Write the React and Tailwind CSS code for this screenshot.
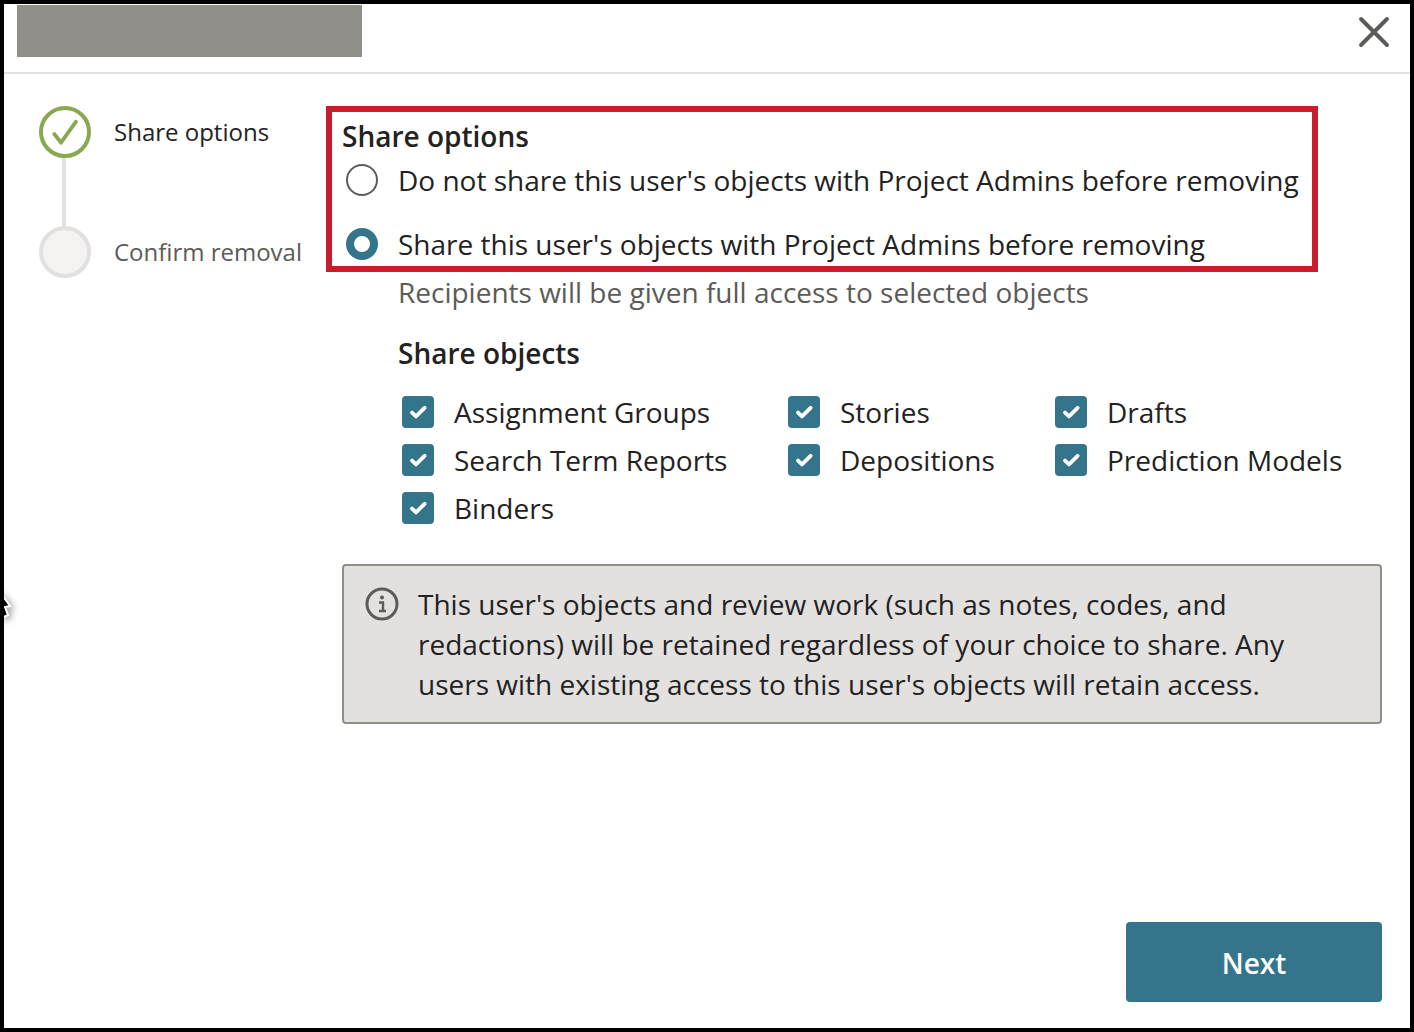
import React from "react";
import { X } from "lucide-react";

const font = { fontFamily: '"Open Sans", sans-serif' };

function Check({ label }) {
  return (
    <div className="flex items-center h-12">
      <span className="w-8 h-8 rounded-[4px] bg-[#34758c] shrink-0">
        <svg width="32" height="32" viewBox="0 0 32 32" fill="none">
          <path d="M10 16.6 L14 20.4 L22.6 11.8" stroke="#fff" strokeWidth="3.8" strokeLinecap="round" strokeLinejoin="round" />
        </svg>
      </span>
      <span className="ml-5 text-[28px] leading-[48px] text-[#23221f] whitespace-nowrap">{label}</span>
    </div>
  );
}

export default function App() {
  return (
    <div className="relative w-[1414px] h-[1032px] bg-white border-4 border-black overflow-hidden flex flex-col" style={font}>
      <header className="h-[70px] shrink-0 border-b-2 border-[#e2e1df] flex items-start justify-between pl-[13px] pr-[18px] pt-px">
        <div className="w-[345px] h-[52px] bg-[#918f89]" />
        <button className="mt-[9px] w-[36px] h-[36px] flex items-center justify-center">
          <X className="shrink-0" size={52} strokeWidth={1.8} color="#5c5b57" />
        </button>
      </header>

      <div className="flex flex-1 min-h-0 pt-[32px]">
        <aside className="w-[322px] shrink-0 pl-[35px] flex flex-col">
          <div className="flex items-center h-[52px]">
            <span className="w-[52px] h-[52px] rounded-full border-4 border-[#8aa84f] flex items-center justify-center shrink-0">
              <svg width="28" height="28" viewBox="0 0 28 28" fill="none">
                <path d="M3.3 16 L10 24.7 L25 3.7" stroke="#8aa84f" strokeWidth="3.8" strokeLinecap="round" strokeLinejoin="round" />
              </svg>
            </span>
            <span className="ml-[23px] text-[24px] leading-[32px] text-[#23221f] whitespace-nowrap">Share options</span>
          </div>
          <div className="ml-[23px] w-[4px] h-[68px] bg-[#e2e1df]" />
          <div className="flex items-center h-[52px]">
            <span className="w-[52px] h-[52px] rounded-full border-4 border-[#e2e1df] bg-[#f4f3f1] shrink-0" />
            <span className="ml-[23px] text-[24px] leading-[32px] text-[#5c5b57] whitespace-nowrap">Confirm removal</span>
          </div>
        </aside>

        <main className="flex-1 min-w-0">
          <section className="w-[992px] h-[166px] border-[6px] border-[#c81e2b] pl-[10px]">
            <h2 className="text-[28px] leading-[48px] font-semibold text-[#23221f]">Share options</h2>
            <div className="flex items-center h-[40px]">
              <span className="w-8 h-8 rounded-full border-2 border-[#5c5b57] bg-white shrink-0 ml-[4px]" />
              <span className="ml-[20px] text-[28px] leading-[40px] text-[#23221f] whitespace-nowrap">Do not share this user's objects with Project Admins before removing</span>
            </div>
            <div className="flex items-center h-[40px] mt-[24px]">
              <span className="w-8 h-8 rounded-full border-[8px] border-[#34758c] bg-white shrink-0 ml-[4px]" />
              <span className="ml-[20px] text-[28px] leading-[40px] text-[#23221f] whitespace-nowrap">Share this user's objects with Project Admins before removing</span>
            </div>
          </section>

          <div className="pl-[72px]">
            <p className="text-[28px] leading-[40px] text-[#5c5b57]">Recipients will be given full access to selected objects</p>
            <h3 className="text-[28px] leading-[40px] font-semibold text-[#23221f] mt-[21px]">Share objects</h3>
            <div className="mt-[15px] pl-[4px] grid grid-cols-[386px_267px_1fr]">
              <Check label="Assignment Groups" />
              <Check label="Stories" />
              <Check label="Drafts" />
              <Check label="Search Term Reports" />
              <Check label="Depositions" />
              <Check label="Prediction Models" />
              <Check label="Binders" />
            </div>
          </div>

          <div className="ml-[16px] mt-[32px] w-[1040px] h-[160px] rounded-[4px] border-2 border-[#908f88] bg-[#e2e1df] flex pl-[21px] pt-[18px]">
            <svg className="shrink-0 mt-[3px]" width="34" height="34" viewBox="0 0 34 34" fill="none">
              <circle cx="17" cy="17" r="15" stroke="#5c5b57" strokeWidth="3" />
              <circle cx="17" cy="10.5" r="2" fill="#5c5b57" />
              <path d="M14 15.5 H18 V23.5 M14 24 H21" stroke="#5c5b57" strokeWidth="2.4" />
            </svg>
            <p className="ml-[19px] text-[28px] leading-[40px] text-[#23221f]">
              This user's objects and review work (such as notes, codes, and<br />
              redactions) will be retained regardless of your choice to share. Any<br />
              users with existing access to this user's objects will retain access.
            </p>
          </div>
        </main>
      </div>

      <div className="flex justify-end pr-[28px] pb-[26px]">
        <button className="w-[256px] h-[80px] rounded-[4px] bg-[#34758c] text-white text-[28px] font-semibold pt-[2px]">Next</button>
      </div>

      <svg className="absolute -left-[4px] top-[586px] drop-shadow-[3px_2px_3px_rgba(0,0,0,0.35)]" width="20" height="38" viewBox="0 0 20 38">
        <path d="M0 2 L10 16 L5 17 L8 25 L2 28 L0 23 Z" fill="#000" stroke="#fff" strokeWidth="2" />
      </svg>
    </div>
  );
}
